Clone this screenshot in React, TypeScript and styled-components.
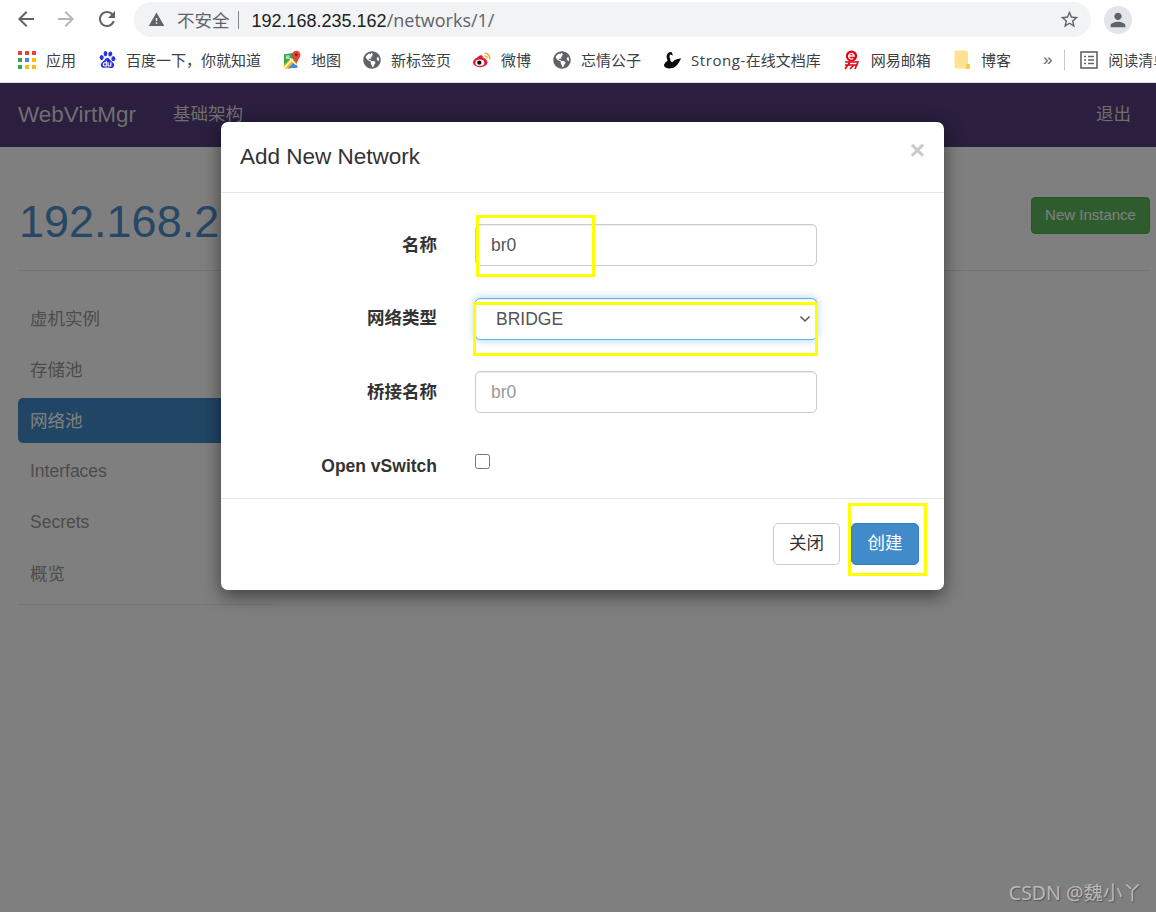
import React from 'react';
import styled, { createGlobalStyle } from 'styled-components';
import { FaGlobeAmericas } from 'react-icons/fa';
import { SiBaidu } from 'react-icons/si';

const sans = `"Liberation Sans", "Noto Sans CJK SC", sans-serif`;

const Global = createGlobalStyle`
    html, body {
        margin: 0;
        height: 100%;
        overflow: hidden;
        background: #fff;
    }
    * {
        box-sizing: border-box;
    }
    #root {
        height: 100%;
    }
`;

const BOOKMARKS = [
    { key: 'apps', label: '应用' },
    { key: 'baidu', label: '百度一下，你就知道' },
    { key: 'maps', label: '地图' },
    { key: 'globe', label: '新标签页' },
    { key: 'weibo', label: '微博' },
    { key: 'globe2', label: '忘情公子' },
    { key: 'swan', label: '在线文档库', latin: 'Strong-' },
    { key: 'mail', label: '网易邮箱' },
    { key: 'folder', label: '博客' },
];

const SIDE_ITEMS = [
    { label: '虚机实例' },
    { label: '存储池' },
    { label: '网络池', active: true },
    { label: 'Interfaces', latin: true },
    { label: 'Secrets', latin: true },
    { label: '概览' },
];

const APP_COLORS = ['#ea4335', '#ea4335', '#ea4335', '#34a853', '#4285f4', '#fbbc04', '#34a853', '#fbbc04', '#fbbc04'];

function BookmarkIcon({ kind }: { kind: string }) {
    if (kind === 'apps') {
        return (
            <AppsGrid>
                {APP_COLORS.map((c, i) => (
                    <AppDot key={i} $color={c} />
                ))}
            </AppsGrid>
        );
    }
    if (kind === 'baidu') return <SiBaidu size={17} color="#2932e1" />;
    if (kind === 'globe' || kind === 'globe2') return <FaGlobeAmericas size={18} color="#5f6368" />;
    if (kind === 'maps') {
        return (
            <svg width="19" height="20" viewBox="0 0 19 20">
                <path d="M1 4 L14 2 V18 L1 19 Z" fill="#34a853" />
                <path d="M1 15 L9 8 L14 13 V18 L1 19 Z" fill="#fbbc04" />
                <path d="M5 19 L12 12 L16 18 Z" fill="#4285f4" />
                <path d="M3 5 h4 v4 h-4 Z" fill="#a8dab5" />
                <path d="M1 19 L10 9" stroke="#fff" strokeWidth="1.4" />
                <path d="M7 8 L14 15" stroke="#fff" strokeWidth="1.4" />
                <circle cx="14" cy="4.6" r="4.4" fill="#ea4335" />
                <path d="M10.2 6.6 L14 14 L17.8 6.6 Z" fill="#ea4335" />
                <circle cx="14" cy="4.6" r="1.5" fill="#8a1f16" />
            </svg>
        );
    }
    if (kind === 'weibo') {
        return (
            <svg width="20" height="18" viewBox="0 0 20 18">
                <ellipse cx="8" cy="11.5" rx="8" ry="5.6" fill="#e6162d" />
                <path d="M4 7 C7 3 10 3 11 5 L9 9 Z" fill="#e6162d" />
                <ellipse cx="7.6" cy="12" rx="5" ry="3.6" fill="#fff" />
                <circle cx="7" cy="12" r="2.4" fill="#111" />
                <path d="M13 1.5 A5.5 5.5 0 0 1 18.5 8" fill="none" stroke="#f5a623" strokeWidth="1.6" />
                <path d="M13 4.5 A2.6 2.6 0 0 1 15.6 7.5" fill="none" stroke="#f5a623" strokeWidth="1.4" />
            </svg>
        );
    }
    if (kind === 'swan') {
        return (
            <svg width="20" height="20" viewBox="0 0 20 20">
                <path
                    d="M9 1 C6 1 4 3 4 6 C4 8 5 9 5 11 C3 12 1 14 1 16 C2 19 6 20 10 19 C15 18 18 13 20 8 C17 9 13 9 11 12 C9 13 8 11 8 9 C7 7 7 5 8 4 L11 5 L10 2 Z"
                    fill="#0a0a0a"
                />
            </svg>
        );
    }
    if (kind === 'mail') {
        return (
            <svg width="17" height="20" viewBox="0 0 17 20">
                <circle cx="8.5" cy="6" r="5.6" fill="#e60012" />
                <path d="M5.6 6 H11.2 A2.8 2.8 0 1 0 10.2 8.4" fill="none" stroke="#fff" strokeWidth="1.3" />
                <path
                    d="M2 12 H15 L12 19 M2 15 H14 M7 12 L2 19 M11 15 L7 19"
                    fill="none"
                    stroke="#e60012"
                    strokeWidth="1.6"
                />
            </svg>
        );
    }
    return (
        <svg width="16" height="19" viewBox="0 0 16 19">
            <path d="M1.5 0.5 H12 Q14 0.5 14 2.5 V18.5 H1.5 Q0.5 18.5 0.5 17 V1.5 Q0.5 0.5 1.5 0.5 Z" fill="#fde293" />
            <path d="M12 14 H16 V18 Q16 19 14 19 H12 Z" fill="#f7cb4d" />
        </svg>
    );
}

export default function App() {
    return (
        <>
            <Global />
            <Frame>
                <Toolbar>
                    <NavIcon viewBox="0 0 24 24" $color="#5f6368">
                        <path d="M20 11H7.83l5.59-5.59L12 4l-8 8 8 8 1.41-1.41L7.83 13H20v-2z" />
                    </NavIcon>
                    <NavIcon viewBox="0 0 24 24" $color="#b4b6b9">
                        <path d="M12 4l-1.41 1.41L16.17 11H4v2h12.17l-5.58 5.59L12 20l8-8z" />
                    </NavIcon>
                    <ReloadIcon viewBox="0 0 24 24" $color="#5f6368">
                        <path d="M17.65 6.35C16.2 4.9 14.21 4 12 4c-4.42 0-7.99 3.58-7.99 8s3.57 8 7.99 8c3.73 0 6.84-2.55 7.73-6h-2.08c-.82 2.33-3.04 4-5.65 4-3.31 0-6-2.69-6-6s2.69-6 6-6c1.66 0 3.14.69 4.22 1.78L13 11h7V4l-2.35 2.35z" />
                    </ReloadIcon>
                    <Omnibox>
                        <WarnIcon viewBox="0 0 24 24">
                            <path d="M1 21h22L12 2 1 21zm12-3h-2v-2h2v2zm0-4h-2v-4h2v4z" />
                        </WarnIcon>
                        <Insecure>不安全</Insecure>
                        <UrlDivider />
                        <Url>
                            192.168.235.162<UrlPath>/networks/1/</UrlPath>
                        </Url>
                        <StarIcon viewBox="0 0 24 24">
                            <path d="M22 9.24l-7.19-.62L12 2 9.19 8.63 2 9.24l5.46 4.73L5.82 21 12 17.27 18.18 21l-1.63-7.03L22 9.24zM12 15.4l-3.76 2.27 1-4.28-3.32-2.88 4.38-.38L12 6.1l1.71 4.04 4.38.38-3.32 2.88 1 4.28L12 15.4z" />
                        </StarIcon>
                    </Omnibox>
                    <Avatar>
                        <svg width="22" height="22" viewBox="0 0 24 24" fill="#5f6368">
                            <path d="M12 12c2.21 0 4-1.79 4-4s-1.79-4-4-4-4 1.79-4 4 1.79 4 4 4zm0 2c-2.67 0-8 1.34-8 4v2h16v-2c0-2.66-5.33-4-8-4z" />
                        </svg>
                    </Avatar>
                </Toolbar>

                <Bookmarks>
                    {BOOKMARKS.map(b => (
                        <Bookmark key={b.key}>
                            <BookmarkIconBox>
                                <BookmarkIcon kind={b.key} />
                            </BookmarkIconBox>
                            <span>
                                {b.latin && <LatinLabel>{b.latin}</LatinLabel>}
                                {b.label}
                            </span>
                        </Bookmark>
                    ))}
                    <More>»</More>
                    <BarDivider />
                    <ReadingList>
                        <svg width="18" height="18" viewBox="0 0 18 18" fill="none" stroke="#5f6368" strokeWidth="1.6">
                            <rect x="1" y="1" width="16" height="16" />
                            <path d="M4 5.5h2M8 5.5h6M4 9h2M8 9h6M4 12.5h2M8 12.5h6" />
                        </svg>
                        阅读清单
                    </ReadingList>
                </Bookmarks>

                <Page>
                    <Navbar>
                        <NavLeft>
                            <Brand>WebVirtMgr</Brand>
                            <NavLink>基础架构</NavLink>
                        </NavLeft>
                        <NavLink>退出</NavLink>
                    </Navbar>

                    <Content>
                        <PageHeader>
                            <HostTitle>192.168.235.162</HostTitle>
                            <GreenButton>New Instance</GreenButton>
                        </PageHeader>
                        <SideNav>
                            {SIDE_ITEMS.map(item => (
                                <SideItem key={item.label} $active={item.active} $latin={item.latin}>
                                    {item.label}
                                </SideItem>
                            ))}
                        </SideNav>
                    </Content>

                    <Backdrop>
                        <Modal>
                            <ModalHeader>
                                <ModalTitle>Add New Network</ModalTitle>
                                <CloseX>×</CloseX>
                            </ModalHeader>
                            <ModalBody>
                                <FormRow>
                                    <FieldLabel>名称</FieldLabel>
                                    <TextField readOnly value="br0" />
                                </FormRow>
                                <FormRow>
                                    <FieldLabel>网络类型</FieldLabel>
                                    <SelectWrap>
                                        <SelectField defaultValue="bridge">
                                            <option value="bridge">BRIDGE</option>
                                            <option value="nat">NAT</option>
                                        </SelectField>
                                        <Chevron width="12" height="8" viewBox="0 0 12 8">
                                            <path d="M1.5 1.5 L6 6 L10.5 1.5" fill="none" stroke="#555" strokeWidth="1.5" />
                                        </Chevron>
                                    </SelectWrap>
                                </FormRow>
                                <FormRow>
                                    <FieldLabel>桥接名称</FieldLabel>
                                    <TextField readOnly placeholder="br0" />
                                </FormRow>
                                <CheckRow>
                                    <FieldLabel $latin>Open vSwitch</FieldLabel>
                                    <Check type="checkbox" />
                                </CheckRow>
                            </ModalBody>
                            <ModalFooter>
                                <GhostButton>关闭</GhostButton>
                                <PrimaryButton>创建</PrimaryButton>
                            </ModalFooter>
                        </Modal>
                    </Backdrop>

                    <Watermark>CSDN @魏小丫</Watermark>
                </Page>

                <Mark $x={476} $y={215} $w={119} $h={62} />
                <Mark $x={473} $y={302} $w={345} $h={54} />
                <Mark $x={848} $y={503} $w={79} $h={73} />
            </Frame>
        </>
    );
}

const Frame = styled.div`
    position: relative;
    height: 100%;
    display: flex;
    flex-direction: column;
    font-family: ${sans};
    overflow: hidden;
`;

const Toolbar = styled.div`
    height: 37px;
    flex: none;
    display: flex;
    align-items: flex-start;
    padding: 2px 0 0 14px;
`;

const NavIcon = styled.svg<{ $color: string }>`
    width: 24px;
    height: 24px;
    margin: 5px 16px 0 0;
    fill: ${p => p.$color};
    flex: none;
`;

const ReloadIcon = styled(NavIcon)`
    margin-left: 1px;
    margin-right: 15px;
`;

const Omnibox = styled.div`
    width: 957px;
    height: 35px;
    border-radius: 18px;
    background: #f1f3f4;
    display: flex;
    align-items: center;
    padding: 0 11px 0 14px;
    flex: none;
`;

const WarnIcon = styled.svg`
    width: 17px;
    height: 17px;
    fill: #5f6368;
    flex: none;
`;

const Insecure = styled.span`
    margin-left: 12px;
    font-size: 17.5px;
    color: #5f6368;
`;

const UrlDivider = styled.span`
    width: 1px;
    height: 18px;
    margin: 0 13px 0 8px;
    background: #80868b;
`;

const Url = styled.span`
    font-size: 18px;
    color: #202124;
    flex: 1;
    white-space: nowrap;
`;

const UrlPath = styled.span`
    font-family: "Open Sans", sans-serif;
    color: #5f6368;
`;

const StarIcon = styled.svg`
    width: 21px;
    height: 21px;
    fill: #5f6368;
    flex: none;
`;

const Avatar = styled.div`
    width: 28px;
    height: 28px;
    margin: 4px 0 0 13px;
    border-radius: 50%;
    background: #e2e5ea;
    display: flex;
    align-items: center;
    justify-content: center;
    flex: none;
`;

const Bookmarks = styled.div`
    height: 46px;
    flex: none;
    display: flex;
    align-items: center;
    gap: 22px;
    padding-left: 18px;
    border-bottom: 1px solid #dadce0;
    overflow: hidden;
    white-space: nowrap;
`;

const Bookmark = styled.div`
    display: flex;
    align-items: center;
    gap: 10px;
    font-size: 15px;
    color: #3c4043;
    flex: none;
`;

const LatinLabel = styled.span`
    font-family: "Open Sans", sans-serif;
    letter-spacing: 0.55px;
`;

const BookmarkIconBox = styled.span`
    width: 18px;
    height: 20px;
    display: flex;
    align-items: center;
    justify-content: center;
    flex: none;
`;

const AppsGrid = styled.div`
    display: grid;
    grid-template-columns: repeat(3, 4px);
    grid-auto-rows: 4px;
    gap: 3px;
`;

const AppDot = styled.span<{ $color: string }>`
    background: ${p => p.$color};
`;

const More = styled.span`
    margin-left: 10px;
    font-size: 17px;
    color: #5f6368;
    flex: none;
`;

const BarDivider = styled.span`
    width: 1px;
    height: 20px;
    margin-left: -10px;
    background: #c4c6c9;
    flex: none;
`;

const ReadingList = styled.div`
    margin-left: -7px;
    display: flex;
    align-items: center;
    gap: 10px;
    font-size: 15px;
    color: #3c4043;
    flex: none;
`;

const Page = styled.div`
    position: relative;
    flex: 1;
    background: #fff;
`;

const Navbar = styled.div`
    height: 64px;
    background: #563d7c;
    display: flex;
    align-items: center;
    justify-content: space-between;
    padding: 0 25px 0 18px;
`;

const NavLeft = styled.div`
    display: flex;
    align-items: center;
    gap: 37px;
`;

const Brand = styled.span`
    font-size: 22.5px;
    color: #ddd;
`;

const NavLink = styled.span`
    padding-bottom: 5px;
    font-size: 17.5px;
    color: #ddd;
`;

const Content = styled.div`
    padding: 0 6px 0 18px;
`;

const PageHeader = styled.div`
    height: 124px;
    display: flex;
    justify-content: space-between;
    align-items: flex-start;
    border-bottom: 1px solid #e6e6e6;
    overflow: hidden;
`;

const HostTitle = styled.h1`
    margin: 48px 0 0 1px;
    font-size: 45px;
    font-weight: 400;
    line-height: 54px;
    color: #4e8fcb;
`;

const GreenButton = styled.button`
    margin-top: 50px;
    width: 119px;
    height: 37px;
    padding: 0 0 2px;
    border: 1px solid #4cae4c;
    border-radius: 4px;
    background: #5cb85c;
    color: #fff;
    font-family: ${sans};
    font-size: 15px;
`;

const SideNav = styled.nav`
    width: 255px;
    margin-top: 25px;
    padding-bottom: 8px;
    display: flex;
    flex-direction: column;
    gap: 6px;
    border-bottom: 1px solid #e6e6e6;
`;

const SideItem = styled.a<{ $active?: boolean; $latin?: boolean }>`
    height: 45px;
    display: flex;
    align-items: center;
    padding: 0 0 ${p => (p.$latin ? 0 : 3)}px 12px;
    border-radius: 5px;
    font-size: 17.5px;
    color: ${p => (p.$active ? '#fff' : '#999')};
    background: ${p => (p.$active ? '#428bca' : 'transparent')};
`;

const Backdrop = styled.div`
    position: absolute;
    inset: 0;
    background: rgba(0, 0, 0, 0.5);
    padding: 39px 0 0 221px;
`;

const Modal = styled.div`
    width: 723px;
    height: 468px;
    display: flex;
    flex-direction: column;
    background: #fff;
    border-radius: 7px;
    box-shadow: 0 6px 18px rgba(0, 0, 0, 0.5);
`;

const ModalHeader = styled.div`
    height: 71px;
    flex: none;
    display: flex;
    align-items: flex-start;
    justify-content: space-between;
    padding: 19px 19px;
    border-bottom: 1px solid #e5e5e5;
`;

const ModalTitle = styled.h4`
    margin: 0;
    font-size: 22.5px;
    font-weight: 400;
    line-height: 32px;
    color: #333;
`;

const CloseX = styled.span`
    margin: -10px 0 0;
    font-size: 26px;
    font-weight: 700;
    line-height: 38px;
    color: #c9c9c9;
`;

const ModalBody = styled.div`
    flex: 1;
    display: flex;
    flex-direction: column;
    gap: 31.5px;
    padding-top: 31px;
`;

const FormRow = styled.div`
    display: grid;
    grid-template-columns: 216px 342px;
    column-gap: 38px;
    align-items: center;
`;

const CheckRow = styled(FormRow)`
    margin-top: 11px;
`;

const FieldLabel = styled.label<{ $latin?: boolean }>`
    padding-bottom: ${p => (p.$latin ? 0 : 4)}px;
    text-align: right;
    font-size: 17.5px;
    font-weight: 700;
    color: #333;
`;

const TextField = styled.input`
    width: 342px;
    height: 42px;
    padding: 0 15px;
    border: 1px solid #ccc;
    border-radius: 5px;
    outline: none;
    font-family: ${sans};
    font-size: 17.5px;
    color: #555;
    box-shadow: inset 0 1px 1px rgba(0, 0, 0, 0.075);

    &::placeholder {
        color: #999;
    }
`;

const SelectWrap = styled.div`
    position: relative;
    width: 342px;
    height: 42px;
`;

const SelectField = styled.select`
    appearance: none;
    width: 100%;
    height: 100%;
    padding: 0 20px;
    border: 1px solid #66afe9;
    border-radius: 5px;
    outline: none;
    background: #fff;
    font-family: ${sans};
    font-size: 17.5px;
    color: #555;
    box-shadow: inset 0 1px 1px rgba(0, 0, 0, 0.075), 0 0 8px rgba(102, 175, 233, 0.6);
`;

const Chevron = styled.svg`
    position: absolute;
    right: 6px;
    top: 17px;
    pointer-events: none;
`;

const Check = styled.input`
    width: 15px;
    height: 15px;
    margin: -9px 0 0;
`;

const ModalFooter = styled.div`
    height: 92px;
    flex: none;
    display: flex;
    justify-content: flex-end;
    align-items: flex-start;
    gap: 11px;
    padding: 24px 25px 0 0;
    border-top: 1px solid #e5e5e5;
`;

const GhostButton = styled.button`
    width: 67px;
    height: 42px;
    padding: 0 0 5px;
    border: 1px solid #ccc;
    border-radius: 5px;
    background: #fff;
    color: #333;
    font-family: ${sans};
    font-size: 17.5px;
`;

const PrimaryButton = styled(GhostButton)`
    width: 68px;
    border-color: #357ebd;
    background: #428bca;
    color: #fff;
`;

const Watermark = styled.div`
    position: absolute;
    right: 14px;
    bottom: 6px;
    font-family: "Noto Sans", "Noto Sans CJK SC", sans-serif;
    font-size: 19.5px;
    color: #b9b9b9;
    text-shadow: 1px 1px 1px #555;
    white-space: nowrap;
`;

const Mark = styled.div<{ $x: number; $y: number; $w: number; $h: number }>`
    position: absolute;
    left: ${p => p.$x}px;
    top: ${p => p.$y}px;
    width: ${p => p.$w}px;
    height: ${p => p.$h}px;
    border: 3px solid #ffff00;
    pointer-events: none;
`;
